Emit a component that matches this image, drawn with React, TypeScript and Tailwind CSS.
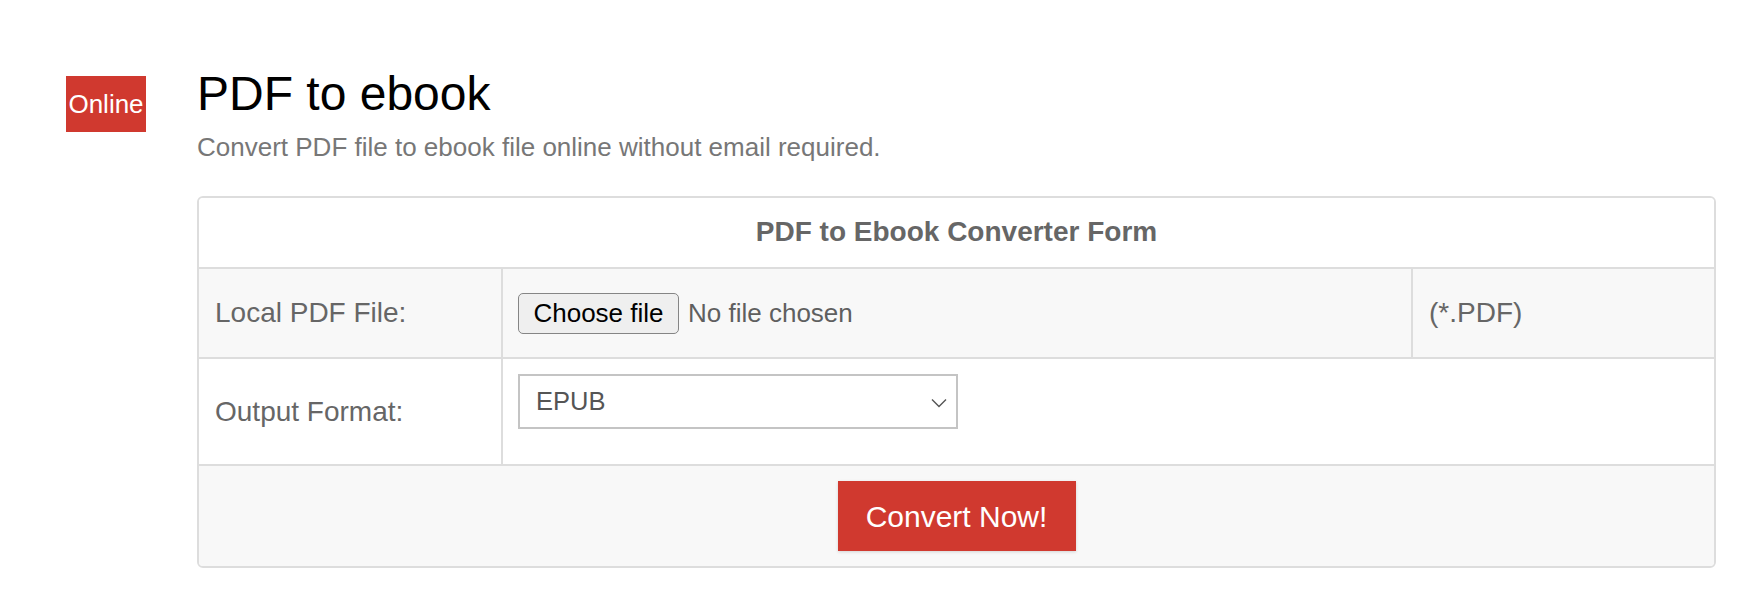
import React from 'react'

function FakeSelect({ value }: { value: string }) {
  return (
    <div className="w-[440px] h-[55px] border-2 border-[#c4c4c4] bg-white flex items-center justify-between pl-[16px] pr-[9px]">
      <span className="text-[25.5px] text-[#555]">{value}</span>
      <svg width="16" height="10" viewBox="0 0 16 10" fill="none" className="mt-[2px]">
        <path d="M1 1.5 L8 8.5 L15 1.5" stroke="#555" strokeWidth="1.4" />
      </svg>
    </div>
  )
}

export default function App() {
  return (
    <div className="min-h-screen bg-white font-['Liberation_Sans',Arial,sans-serif]">
      <div className="flex items-start pt-[70px] pl-[66px]">
        {/* badge */}
        <div className="mt-[6px] w-[80px] h-[56px] bg-[#d0392f] text-white text-[26px] flex items-center justify-center shrink-0">
          Online
        </div>

        <div className="ml-[51px] w-[1519px]">
          <h1 className="text-[48px] leading-none text-black">PDF to ebook</h1>
          <p className="mt-[16px] text-[26px] leading-none text-[#777]">
            Convert PDF file to ebook file online without email required.
          </p>

          {/* converter form */}
          <div className="mt-[36px] border-2 border-[#ddd] rounded-[6px] overflow-hidden text-[#666] text-[28px]">
            <div className="h-[71px] border-b-2 border-[#ddd] bg-white flex items-center justify-center font-bold pb-[2px]">
              PDF to Ebook Converter Form
            </div>

            <div className="h-[90px] border-b-2 border-[#ddd] bg-[#f8f8f8] flex">
              <div className="w-[304px] border-r-2 border-[#ddd] flex items-center pl-4">Local PDF File:</div>
              <div className="w-[910px] border-r-2 border-[#ddd] flex items-center pl-[15px]">
                <div className="w-[161px] h-[41px] border-[1.5px] border-[#858585] rounded-[5px] bg-[#efefef] flex items-center justify-center text-[26px] text-black">
                  Choose file
                </div>
                <span className="ml-[9px] text-[26px] text-[#5f5f5f]">No file chosen</span>
              </div>
              <div className="flex-1 flex items-center pl-4">(*.PDF)</div>
            </div>

            <div className="h-[107px] border-b-2 border-[#ddd] bg-white flex">
              <div className="w-[304px] border-r-2 border-[#ddd] flex items-center pl-4">Output Format:</div>
              <div className="flex-1 pl-[15px] pt-[15px]">
                <FakeSelect value="EPUB" />
              </div>
            </div>

            <div className="h-[100px] bg-[#f8f8f8] flex items-center justify-center">
              <button className="w-[238px] h-[70px] bg-[#d0392f] text-white text-[30px] shadow-[0_1px_3px_rgba(0,0,0,0.15)]">
                Convert Now!
              </button>
            </div>
          </div>
        </div>
      </div>
    </div>
  )
}
